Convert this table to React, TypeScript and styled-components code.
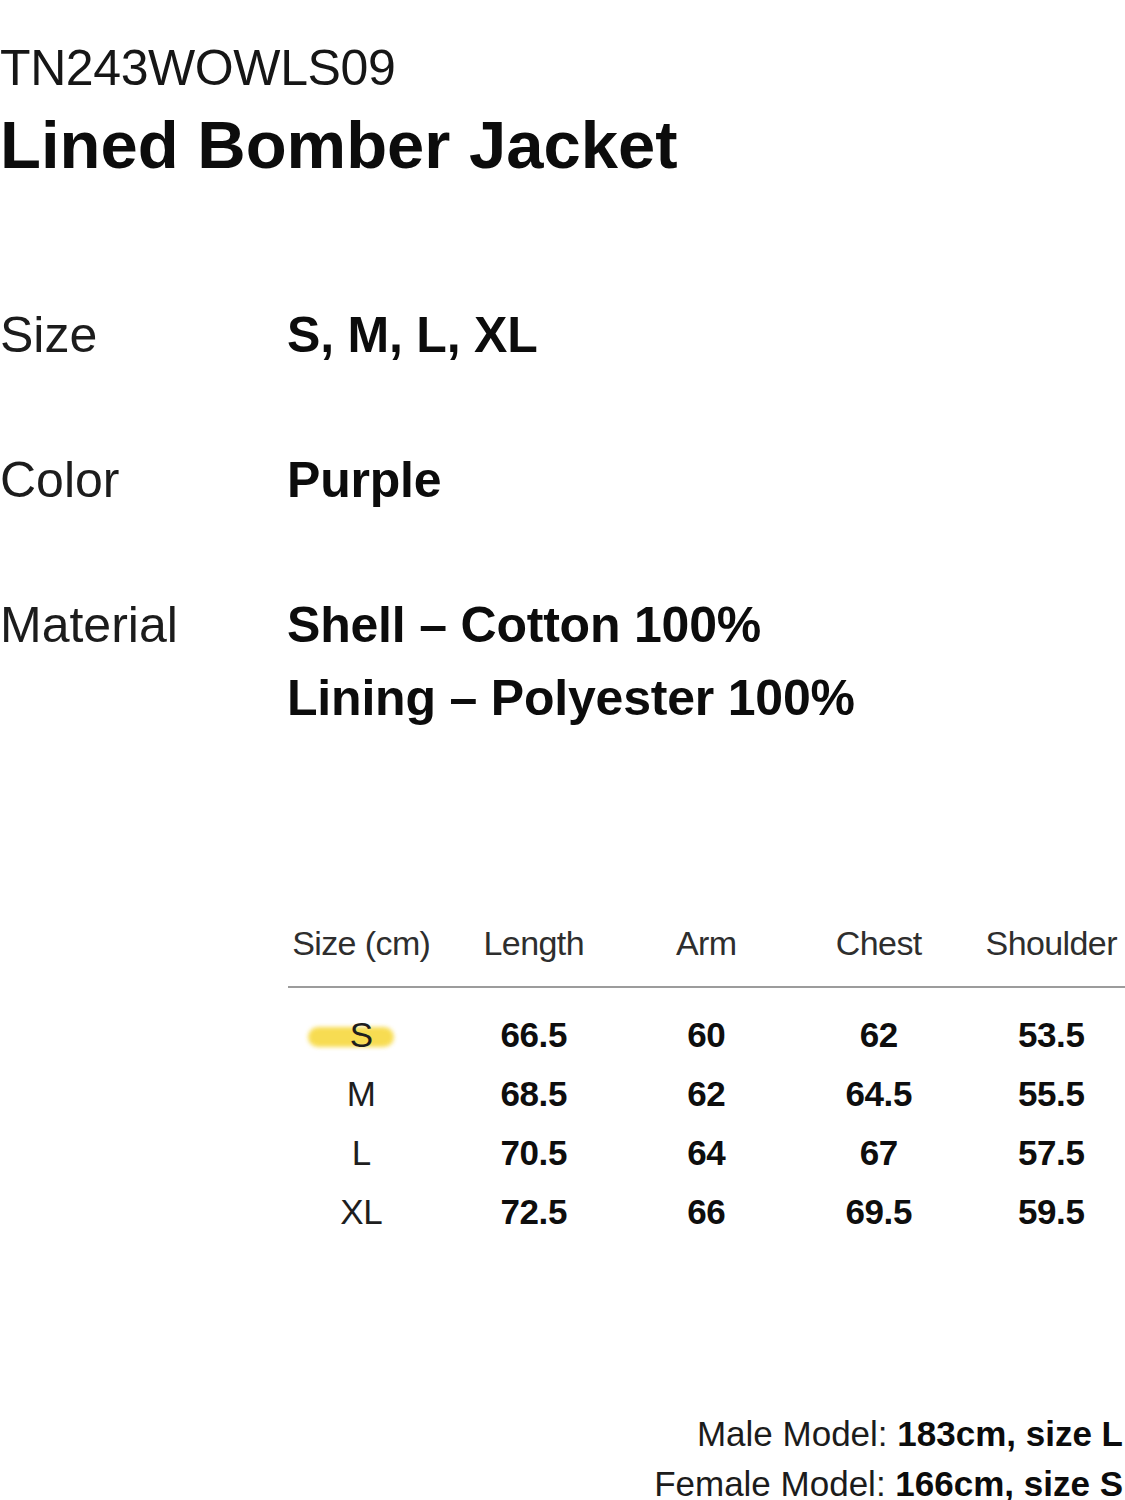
import React from 'react';
import styled, { createGlobalStyle } from 'styled-components';

const GlobalStyle = createGlobalStyle`
  html, body {
    margin: 0;
    padding: 0;
    background: #ffffff;
    overflow-x: hidden;
  }
  body {
    font-family: "Liberation Sans", Arial, Helvetica, sans-serif;
    color: #111;
  }
`;

const Page = styled.div`
  width: 1125px;
  min-height: 1500px;
  overflow: hidden;
  padding-top: 38px;
  box-sizing: border-box;
`;

const Code = styled.div`
  font-size: 50px;
  line-height: 60px;
  letter-spacing: -0.4px;
  color: #161616;
`;

const Title = styled.h1`
  margin: 7px 0 0;
  font-size: 67px;
  line-height: 80px;
  font-weight: 700;
  letter-spacing: 0;
  color: #0c0c0c;
`;

const Specs = styled.div`
  margin-top: 114px;
  display: flex;
  flex-direction: column;
  gap: 72px;
`;

const SpecRow = styled.div`
  display: grid;
  grid-template-columns: 287px 1fr;
  font-size: 50px;
  line-height: 73px;
`;

const SpecLabel = styled.div`
  color: #1c1c1c;
`;

const SpecValue = styled.div`
  font-weight: 700;
  color: #0c0c0c;
  letter-spacing: -0.2px;
`;

const Table = styled.div`
  margin-top: 183px;
  margin-left: 275px;
  display: grid;
  grid-template-columns: repeat(5, 172.5px);
`;

const HeadCell = styled.div`
  text-align: center;
  font-size: 34px;
  line-height: 50px;
  letter-spacing: -0.6px;
  color: #2e2e2e;
  white-space: nowrap;
`;

const Rule = styled.div`
  grid-column: 1 / -1;
  margin: 18px 0 17px 13px;
  height: 2px;
  background: #9c9c9c;
`;

const Cell = styled.div<{ $bold?: boolean }>`
  text-align: center;
  font-size: 35px;
  line-height: 59px;
  letter-spacing: -0.4px;
  font-weight: ${(p) => (p.$bold ? 700 : 400)};
  color: ${(p) => (p.$bold ? '#0e0e0e' : '#1e1e1e')};
`;

const Highlight = styled.span`
  position: relative;
  z-index: 0;

  &::before {
    content: '';
    position: absolute;
    z-index: -1;
    left: -42px;
    right: -21px;
    top: 12px;
    height: 20px;
    border-radius: 10px;
    background: #f7d940;
    filter: blur(2px);
    opacity: 0.9;
  }
`;

const Models = styled.div`
  margin-top: 168px;
  padding-right: 2px;
  text-align: right;
  font-size: 35px;
  line-height: 50px;
  color: #1c1c1c;
  white-space: nowrap;

  b {
    font-weight: 700;
    color: #0c0c0c;
  }
`;

const headers = ['Size (cm)', 'Length', 'Arm', 'Chest', 'Shoulder'];

const rows = [
  ['S', '66.5', '60', '62', '53.5'],
  ['M', '68.5', '62', '64.5', '55.5'],
  ['L', '70.5', '64', '67', '57.5'],
  ['XL', '72.5', '66', '69.5', '59.5'],
];

export default function App() {
  return (
    <>
      <GlobalStyle />
      <Page>
        <Code>TN243WOWLS09</Code>
        <Title>Lined Bomber Jacket</Title>

        <Specs>
          <SpecRow>
            <SpecLabel>Size</SpecLabel>
            <SpecValue>S, M, L, XL</SpecValue>
          </SpecRow>
          <SpecRow>
            <SpecLabel>Color</SpecLabel>
            <SpecValue>Purple</SpecValue>
          </SpecRow>
          <SpecRow>
            <SpecLabel>Material</SpecLabel>
            <SpecValue>
              Shell – Cotton 100%
              <br />
              Lining – Polyester 100%
            </SpecValue>
          </SpecRow>
        </Specs>

        <Table>
          {headers.map((h) => (
            <HeadCell key={h}>{h}</HeadCell>
          ))}
          <Rule />
          {rows.map((r) =>
            r.map((v, i) => (
              <Cell key={r[0] + i} $bold={i > 0}>
                {i === 0 && v === 'S' ? <Highlight>{v}</Highlight> : v}
              </Cell>
            ))
          )}
        </Table>

        <Models>
          Male Model: <b>183cm, size L</b>
          <br />
          Female Model: <b>166cm, size S</b>
        </Models>
      </Page>
    </>
  );
}
